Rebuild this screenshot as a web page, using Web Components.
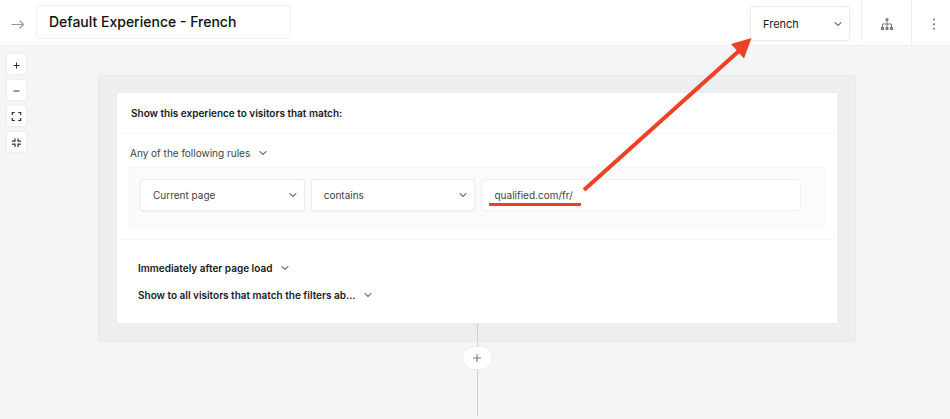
<!DOCTYPE html>
<html lang="en">
<head>
<meta charset="utf-8">
<title>Default Experience - French</title>
<style>
    body {
        margin: 0;
        background: #f4f5f7;
        color: #16191b;
        font-family: Inter, "Liberation Sans", sans-serif;
        font-size: 10px;
        line-height: 16px;
    }
</style>
</head>
<body>
<experience-page></experience-page>

<script>
class DropDown extends HTMLElement {
    constructor() {
        super();
        const shadow = this.attachShadow({ mode: 'open' });
        shadow.innerHTML = `
            <style>
                :host {
                    display: grid;
                    align-items: center;
                    box-sizing: border-box;
                    height: 32px;
                    background: #fff;
                    border: 1px solid #ececed;
                    border-radius: 3px;
                    box-shadow: 0 1px 2px rgba(0, 0, 0, 0.05);
                    color: #3c4245;
                }
                :host([plain]) {
                    display: inline-grid;
                    height: 16px;
                    border: 0;
                    box-shadow: none;
                    background: none;
                }
                :host([strong]) {
                    color: #16191b;
                    font-weight: 600;
                }
                select {
                    grid-area: 1 / 1;
                    appearance: none;
                    width: 100%;
                    height: 100%;
                    margin: 0;
                    padding: 0 24px 0 12px;
                    border: 0;
                    background: none;
                    color: inherit;
                    font: inherit;
                }
                :host([plain]) select {
                    padding: 0 16px 0 0;
                }
                svg {
                    grid-area: 1 / 1;
                    justify-self: end;
                    width: 8px;
                    height: 6px;
                    margin-right: 7px;
                    pointer-events: none;
                }
                :host([plain]) svg {
                    margin-right: 0;
                }
            </style>
            <select><option></option></select>
            <svg viewBox="0 0 8 6" fill="none" stroke="#737b7e" stroke-width="1.1" stroke-linecap="round" stroke-linejoin="round"><path d="M1 1.5 4 4.5 7 1.5"/></svg>
        `;
        shadow.querySelector('select').setAttribute('aria-label', this.getAttribute('label'));
        shadow.querySelector('option').textContent = this.getAttribute('value');
    }
}

class TextField extends HTMLElement {
    constructor() {
        super();
        const shadow = this.attachShadow({ mode: 'open' });
        shadow.innerHTML = `
            <style>
                :host {
                    display: block;
                    position: relative;
                }
                input {
                    display: block;
                    box-sizing: border-box;
                    width: 100%;
                    height: 32px;
                    padding: 0 12px;
                    border: 1px solid #f0f1f1;
                    border-radius: 3px;
                    background: #fff;
                    color: #3c4245;
                    font: inherit;
                    outline: 0;
                }
                :host([title-size]) input {
                    height: 34px;
                    color: #0c0e0f;
                    font-size: 14px;
                    font-weight: 500;
                }
            </style>
            <input type="text">
            <slot></slot>
        `;
        const input = shadow.querySelector('input');
        input.value = this.getAttribute('value');
        input.setAttribute('aria-label', this.getAttribute('label'));
    }
}

class TopBar extends HTMLElement {
    constructor() {
        super();
        const shadow = this.attachShadow({ mode: 'open' });
        shadow.innerHTML = `
            <style>
                :host {
                    display: flex;
                    align-items: center;
                    height: 45px;
                    background: #fff;
                    border-bottom: 1px solid #eff0f1;
                }
                button {
                    display: flex;
                    align-items: center;
                    justify-content: center;
                    height: 45px;
                    padding: 2px 0 0;
                    border: 0;
                    background: none;
                }
                .back {
                    width: 36px;
                }
                text-field {
                    width: 255px;
                    margin-bottom: 2px;
                }
                drop-down {
                    width: 100px;
                    height: 35px;
                    margin: 2px 11px 0 auto;
                    color: #16191b;
                    font-size: 11px;
                }
                .tree {
                    width: 51px;
                    border: solid #eeeff0;
                    border-width: 0 1px;
                }
                .more {
                    width: 38px;
                    padding-left: 6px;
                }
            </style>
            <button class="back" aria-label="Back">
                <svg width="14" height="12" viewBox="0 0 14 12" fill="none" stroke="#94999c" stroke-width="1.2" stroke-linecap="round" stroke-linejoin="round"><path d="M1 6.500h11.500M9 3l3.500 3.500L9 10"/></svg>
            </button>
            <text-field title-size label="Experience name" value="Default Experience - French"></text-field>
            <drop-down label="Language" value="French"></drop-down>
            <button class="tree" aria-label="Flow map">
                <svg width="14" height="14" viewBox="0 0 14 14" fill="#75807b"><path d="M5.600 1.200h2.800v2.800H5.600zM1 10h3v3H1zM5.500 10h3v3h-3zM10 10h3v3h-3z"/><path d="M7 4v6M2.500 10V7h9v3" fill="none" stroke="#75807b"/></svg>
            </button>
            <button class="more" aria-label="More">
                <svg width="4" height="14" viewBox="0 0 4 14" fill="#6f7577"><circle cx="2" cy="2.600" r="1"/><circle cx="2" cy="7.200" r="1"/><circle cx="2" cy="11.800" r="1"/></svg>
            </button>
        `;
    }
}

class ZoomTools extends HTMLElement {
    constructor() {
        super();
        const shadow = this.attachShadow({ mode: 'open' });
        shadow.innerHTML = `
            <style>
                :host {
                    display: flex;
                    flex-direction: column;
                    gap: 6px;
                }
                button {
                    display: flex;
                    align-items: center;
                    justify-content: center;
                    width: 19px;
                    height: 20px;
                    padding: 0;
                    border: 0;
                    border-radius: 2px;
                    background: #fff;
                    box-shadow: 0 0 3px rgba(0, 0, 0, 0.08);
                }
                svg {
                    width: 11px;
                    height: 11px;
                    fill: none;
                    stroke: #2c3032;
                    stroke-width: 1.2;
                }
            </style>
            <button aria-label="Zoom in"><svg viewBox="0 0 11 11"><path d="M2.500 6.500h6M5.500 3.500v6" stroke-width="1"/></svg></button>
            <button aria-label="Zoom out"><svg viewBox="0 0 11 11"><path d="M2.500 6h6" stroke-width="1"/></svg></button>
            <button aria-label="Fit to screen"><svg viewBox="0 0 11 11"><path d="M1.300 4V1.500h2.500M7.200 1.500h2.500V4M9.700 7v2.500H7.200M3.800 9.500H1.300V7"/></svg></button>
            <button aria-label="Collapse"><svg viewBox="0 0 11 11"><path d="M1 4.200h3V1.500M7 1.500v2.700h3M10 7.200H7v2.700M4 9.900V7.200H1"/></svg></button>
        `;
    }
}

class RuleCard extends HTMLElement {
    constructor() {
        super();
        const shadow = this.attachShadow({ mode: 'open' });
        shadow.innerHTML = `
            <style>
                :host {
                    display: block;
                    background: #fff;
                }
                h2 {
                    margin: 0;
                    padding: 12px 14px;
                    border-bottom: 1px solid #f6f7f7;
                    font-size: 10px;
                    font-weight: 600;
                }
                .filters {
                    padding: 11px 12px 11px 11px;
                    border-bottom: 1px solid #f6f7f7;
                }
                .filters > drop-down {
                    margin-left: 2px;
                }
                .rules {
                    display: grid;
                    grid-template-columns: 33fr 33fr 64fr;
                    gap: 6px;
                    margin-top: 6px;
                    padding: 11px 23px 16px 11px;
                    background: #fbfbfb;
                    border: 1px solid #f7f7f7;
                }
                .timing {
                    display: flex;
                    flex-direction: column;
                    align-items: flex-start;
                    gap: 11px;
                    padding: 20px 21px;
                }
            </style>
            <h2><slot></slot></h2>
            <div class="filters">
                <drop-down plain label="Match mode" value="Any of the following rules"></drop-down>
                <div class="rules">
                    <drop-down label="Property" value="Current page"></drop-down>
                    <drop-down label="Operator" value="contains"></drop-down>
                    <text-field label="Value" value="qualified.com/fr/"><mark-line></mark-line></text-field>
                </div>
            </div>
            <div class="timing">
                <drop-down plain strong label="Timing" value="Immediately after page load"></drop-down>
                <drop-down plain strong label="Audience" value="Show to all visitors that match the filters ab..."></drop-down>
            </div>
        `;
    }
}

// red underline laid over a field's text
class MarkLine extends HTMLElement {
    constructor() {
        super();
        this.attachShadow({ mode: 'open' }).innerHTML = `
            <style>
                :host {
                    position: absolute;
                    left: 8px;
                    bottom: 5px;
                    width: 92px;
                    height: 3px;
                    background: #ec4027;
                }
            </style>
        `;
    }
}

// red arrow from the rule value up to the language menu
class MarkArrow extends HTMLElement {
    constructor() {
        super();
        this.attachShadow({ mode: 'open' }).innerHTML = `
            <style>
                :host {
                    position: absolute;
                    top: 36px;
                    right: 196px;
                    width: 174px;
                    height: 158px;
                    pointer-events: none;
                }
            </style>
            <svg width="174" height="158" viewBox="0 0 174 158"><path d="M4 154 160 14" stroke="#ec4027" stroke-width="4"/><path d="M171.500 2 164 22.500 151 8z" fill="#ec4027"/></svg>
        `;
    }
}

class AddStep extends HTMLElement {
    constructor() {
        super();
        this.attachShadow({ mode: 'open' }).innerHTML = `
            <style>
                :host {
                    display: flex;
                    flex-direction: column;
                    align-items: center;
                }
                i {
                    width: 1px;
                    height: 4px;
                    background: #ccd0d4;
                }
                i:last-child {
                    height: 46px;
                }
                button {
                    display: flex;
                    align-items: center;
                    justify-content: center;
                    width: 31px;
                    height: 24px;
                    padding: 0;
                    border: 1px solid #eaebec;
                    border-radius: 12px;
                    background: #fff;
                }
            </style>
            <i></i>
            <button aria-label="Add step">
                <svg width="8" height="8" viewBox="0 0 8 8" stroke="#737b78" stroke-width="1.1"><path d="M0 4h8M4 0v8"/></svg>
            </button>
            <i></i>
        `;
    }
}

class ExperiencePage extends HTMLElement {
    constructor() {
        super();
        this.attachShadow({ mode: 'open' }).innerHTML = `
            <style>
                :host {
                    display: block;
                    position: relative;
                }
                main {
                    display: flex;
                    align-items: flex-start;
                    gap: 72px;
                    padding: 8px 94px 0 7px;
                }
                .flow {
                    flex: 1;
                    padding-top: 21px;
                }
                .panel {
                    padding: 17px 18px 0;
                    background: #edeef0;
                    border: 1px solid #e9eaec;
                    border-radius: 3px;
                }
                .stem {
                    width: 1px;
                    height: 18px;
                    margin: 0 auto;
                    background: #ccd0d4;
                }
            </style>
            <top-bar></top-bar>
            <main>
                <zoom-tools></zoom-tools>
                <div class="flow">
                    <div class="panel">
                        <rule-card>Show this experience to visitors that match:</rule-card>
                        <div class="stem"></div>
                    </div>
                    <add-step></add-step>
                </div>
            </main>
            <mark-arrow></mark-arrow>
        `;
    }
}

customElements.define('drop-down', DropDown);
customElements.define('text-field', TextField);
customElements.define('top-bar', TopBar);
customElements.define('zoom-tools', ZoomTools);
customElements.define('mark-line', MarkLine);
customElements.define('mark-arrow', MarkArrow);
customElements.define('rule-card', RuleCard);
customElements.define('add-step', AddStep);
customElements.define('experience-page', ExperiencePage);
</script>
</body>
</html>
